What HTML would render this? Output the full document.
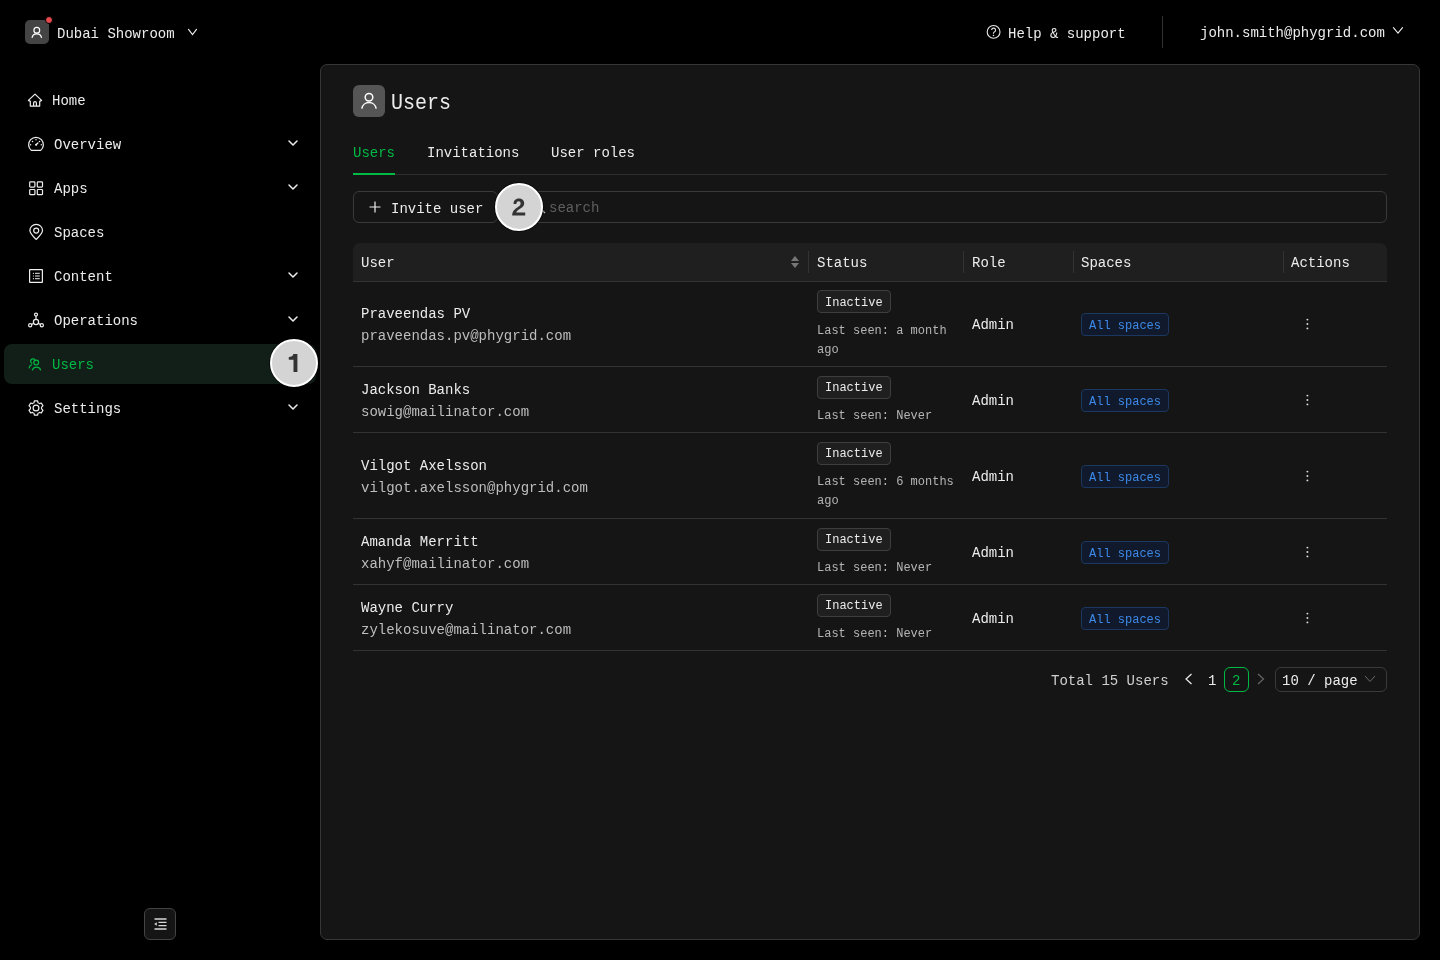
<!DOCTYPE html>
<html>
<head>
<meta charset="utf-8">
<style>
*{margin:0;padding:0;box-sizing:border-box}
html,body{width:1440px;height:960px;overflow:hidden;background:#000}
body{font-family:"Liberation Mono",monospace;color:#ececec;font-size:14px}
#root{position:absolute;left:0;top:0;width:1440px;height:960px;will-change:transform}
.a{position:absolute;white-space:nowrap}
.t14{font-size:14px;line-height:20px}
.t12{font-size:12px;line-height:19px}
svg{position:absolute;overflow:visible}
.panel{position:absolute;left:320px;top:64px;width:1100px;height:876px;background:#151515;border:1px solid #363636;border-radius:7px}
.hl{position:absolute;height:1px;background:#2e2e2e}
.tag{position:absolute;height:23px;border:1px solid #3e3e3e;background:#1f1f1f;border-radius:4px;font-size:12px;line-height:21px;padding:2px 7px 0;color:#ececec}
.btag{position:absolute;height:23px;border:1px solid #1c3760;background:#111a2c;border-radius:4px;font-size:12px;line-height:21px;padding:2px 7px 0;color:#3c89e8}
.badge{position:absolute;width:48px;height:48px;border-radius:50%;background:#d4d4d4;border:2px solid #fff;box-shadow:0 0 0 1px rgba(0,0,0,.55)}
</style>
</head>
<body>
<div id="root">
<div class="a" style="left:25px;top:20px;width:24px;height:24px;background:#444;border-radius:5px"></div>
<svg style="left:25px;top:20px" width="24" height="24" viewBox="0 0 24 24" fill="none" stroke="#fff" stroke-width="1.2"><circle cx="11.8" cy="10.2" r="2.9"/><path d="M7 17.8 A4.9 4.9 0 0 1 16.6 17.8"/></svg>
<div class="a" style="left:45px;top:16px;width:8px;height:8px;border-radius:50%;background:#e5484d;border:1px solid #000"></div>
<div class="a t14" style="left:57px;top:24px">Dubai Showroom</div>
<svg style="left:186px;top:27px" width="12" height="8" viewBox="0 0 12 8" fill="none" stroke="#f4f4f4" stroke-width="1.1" stroke-linecap="round"><path d="M2.5 2.4 L6.5 7.6 L10.5 2.4"/></svg>
<svg style="left:986px;top:25px" width="15" height="15" viewBox="0 0 15 15" fill="none" stroke="#e8e8e8" stroke-width="1.1"><circle cx="7.6" cy="6.9" r="6.4"/><path d="M5.6 5.1 A2 2 0 1 1 8.3 7 C7.7 7.3 7.5 7.8 7.5 8.4 V8.7"/><circle cx="7.5" cy="10.5" r="0.75" fill="#e8e8e8" stroke="none"/></svg>
<div class="a t14" style="left:1008px;top:24px">Help &amp; support</div>
<div class="a" style="left:1162px;top:16px;width:1px;height:32px;background:#333"></div>
<div class="a t14" style="left:1200px;top:23px">john.smith@phygrid.com</div>
<svg style="left:1392px;top:27px" width="12" height="8" viewBox="0 0 12 8" fill="none" stroke="#f0f0f0" stroke-width="1.1" stroke-linecap="round"><path d="M1.4 0.6 L6 6.2 L10.5 0.6"/></svg>
<div class="a" style="left:4px;top:344px;width:312px;height:40px;background:#121f18;border-radius:8px"></div>
<div class="a t14" style="left:52px;top:91px;color:#ececec">Home</div>
<div class="a t14" style="left:54px;top:135px;color:#ececec">Overview</div>
<div class="a t14" style="left:54px;top:179px;color:#ececec">Apps</div>
<div class="a t14" style="left:54px;top:223px;color:#ececec">Spaces</div>
<div class="a t14" style="left:54px;top:267px;color:#ececec">Content</div>
<div class="a t14" style="left:54px;top:311px;color:#ececec">Operations</div>
<div class="a t14" style="left:52px;top:355px;color:#00b944">Users</div>
<div class="a t14" style="left:54px;top:399px;color:#ececec">Settings</div>
<svg style="left:0;top:0" width="320" height="960" viewBox="0 0 320 960" fill="none" stroke="#eeeeee" stroke-width="1.2" stroke-linecap="round" stroke-linejoin="round">
<path d="M30.3 106.1 V101.4 L28.4 100.4 L35 94.1 L41.6 100.4 L39.7 101.4 V106.1 Z M33.6 106 V103.1 A1.4 1.4 0 0 1 36.4 103.1 V106"/>
<path d="M31.3 150.4 A7.4 7.4 0 1 1 40.7 150.4 Z"/><path d="M36.1 144.8 L37.9 143" stroke-width="1.3"/><circle cx="36.1" cy="144.8" r="1.05" fill="#eeeeee" stroke="none"/><circle cx="36" cy="139.8" r="0.7" fill="#eeeeee" stroke="none"/><circle cx="32.5" cy="141.4" r="0.75" fill="#eeeeee" stroke="none"/><circle cx="39.5" cy="141.4" r="0.75" fill="#eeeeee" stroke="none"/><circle cx="30.6" cy="144.8" r="0.7" fill="#eeeeee" stroke="none"/><circle cx="41.3" cy="144.8" r="0.7" fill="#eeeeee" stroke="none"/>
<rect x="29.7" y="181.9" width="5.2" height="5.2" rx="0.8"/>
<rect x="29.7" y="189.5" width="5.2" height="5.2" rx="0.8"/>
<rect x="37.3" y="181.9" width="5.2" height="5.2" rx="0.8"/>
<rect x="37.3" y="189.5" width="5.2" height="5.2" rx="0.8"/>
<path d="M36.2 239.4 C33.2 236.6 29.9 233.6 29.9 230.6 A6.3 6.3 0 0 1 42.5 230.6 C42.5 233.6 39.2 236.6 36.2 239.4 Z"/><circle cx="36.2" cy="230.6" r="2.5"/>
<rect x="29.6" y="269.6" width="12.8" height="12.8" rx="0.3"/><path d="M35.4 273.3 H39.4 M35.4 276 H39.4 M35.4 278.7 H39.4" stroke-width="1"/><circle cx="33.4" cy="273.3" r="0.6" fill="#eeeeee" stroke="none"/><circle cx="33.4" cy="276" r="0.6" fill="#eeeeee" stroke="none"/><circle cx="33.4" cy="278.7" r="0.6" fill="#eeeeee" stroke="none"/>
<circle cx="36" cy="314.6" r="1.5"/><circle cx="36" cy="322" r="2.6"/><circle cx="30.2" cy="325.2" r="1.6"/><circle cx="41.8" cy="325.2" r="1.6"/><path d="M36 316.1 V319.4 M31.6 324.4 L33.7 323.2 M40.4 324.4 L38.3 323.2"/>
<g stroke="#00b944"><circle cx="36.2" cy="362.6" r="2.4"/><path d="M32.4 370 A4.4 4.4 0 0 1 40.6 370"/><path d="M35 360.2 A2.3 2.3 0 1 0 31.8 363.2"/><path d="M29.2 367.8 A3.8 3.8 0 0 1 31.6 364.8"/></g>
<path d="M33.99 402.77 L34.36 400.89 L37.64 400.89 L38.01 402.77 A5.60 5.60 0 0 1 39.52 403.65 L41.34 403.02 L42.98 405.87 L41.53 407.12 A5.60 5.60 0 0 1 41.53 408.88 L42.98 410.13 L41.34 412.98 L39.52 412.35 A5.60 5.60 0 0 1 38.01 413.23 L37.64 415.11 L34.36 415.11 L33.99 413.23 A5.60 5.60 0 0 1 32.48 412.35 L30.66 412.98 L29.02 410.13 L30.47 408.88 A5.60 5.60 0 0 1 30.47 407.12 L29.02 405.87 L30.66 403.02 L32.48 403.65 A5.60 5.60 0 0 1 33.99 402.77 Z"/><circle cx="36" cy="408" r="2.9"/>
<path d="M289 141 L293 145 L297 141" stroke-width="1.5"/>
<path d="M289 185 L293 189 L297 185" stroke-width="1.5"/>
<path d="M289 273 L293 277 L297 273" stroke-width="1.5"/>
<path d="M289 317 L293 321 L297 317" stroke-width="1.5"/>
<path d="M289 405 L293 409 L297 405" stroke-width="1.5"/>
</svg>
<div class="a" style="left:144px;top:908px;width:32px;height:32px;border:1px solid #444;border-radius:6px;background:#151515"></div>
<svg style="left:145px;top:908px" width="31" height="31" viewBox="0 0 31 31" fill="none" stroke="#d8d8d8" stroke-width="1.3"><path d="M9.5 11 H21.5 M13.5 14.4 H21.5 M13.5 17.6 H21.5 M9.5 21 H21.5"/><path d="M9.2 16 L11.8 14.2 V17.8 Z" fill="#d8d8d8" stroke="none"/></svg>
<div class="badge" style="left:270px;top:339px"></div>
<svg style="left:0;top:0" width="10" height="10"><path d="M293.3 354 H297.4 V372 H293.5 V359.8 H288.8 V357 C291.3 357 292.9 356.2 293.3 354 Z" fill="#333"/></svg>
<div class="panel"></div>
<div class="a" style="left:353px;top:85px;width:32px;height:32px;background:#555;border-radius:6px"></div>
<svg style="left:353px;top:85px" width="32" height="32" viewBox="0 0 32 32" fill="none" stroke="#fff" stroke-width="1.5"><circle cx="16" cy="12.3" r="3.8"/><path d="M8.8 23.6 A7.3 7.3 0 0 1 23.2 23.6"/></svg>
<div class="a" style="left:391px;top:90px;font-size:20px;line-height:28px;transform:scaleY(1.12);transform-origin:0 19.3px">Users</div>
<div class="hl" style="left:353px;top:174px;width:1034px;background:#2e2e2e"></div>
<div class="a" style="left:353px;top:173px;width:42px;height:2px;background:#00b944"></div>
<div class="a t14" style="left:353px;top:143px;color:#00b944">Users</div>
<div class="a t14" style="left:427px;top:143px">Invitations</div>
<div class="a t14" style="left:551px;top:143px">User roles</div>
<div class="a" style="left:514px;top:191px;width:873px;height:32px;border:1px solid #3a3a3a;border-radius:6px"></div>
<svg style="left:532px;top:200px" width="14" height="14" viewBox="0 0 14 14" fill="none" stroke="#bbb" stroke-width="1.2"><circle cx="6" cy="6" r="4.6"/><path d="M9.4 9.4 L13 13"/></svg>
<div class="a t14" style="left:549px;top:198px;color:#5f5f5f">search</div>
<div class="a" style="left:353px;top:191px;width:145px;height:32px;border:1px solid #3a3a3a;border-radius:6px;background:#151515"></div>
<svg style="left:369px;top:201px" width="12" height="12" viewBox="0 0 12 12" fill="none" stroke="#f0f0f0" stroke-width="1.2"><path d="M6 0.5 V11.5 M0.5 6 H11.5"/></svg>
<div class="a t14" style="left:391px;top:199px">Invite user</div>
<div class="badge" style="left:495px;top:183px"></div>
<svg style="left:0;top:0" width="10" height="10"><path d="M513.6 204 C513.4 200.6 515.6 198.4 518.8 198.4 C522 198.4 524.2 200.4 524.2 203.2 C524.2 205.6 522.8 207 520.4 208.6 C518.2 210 516.6 211.2 516.2 212.6 H525.2 V215.6 H512.2 C512.2 211.2 514.6 209.2 517.6 207.2 C519.8 205.8 520.6 205 520.6 203.4 C520.6 202 519.8 201.2 518.6 201.2 C517.2 201.2 516.4 202.2 516.4 204 Z" fill="#333"/></svg>
<div class="a" style="left:353px;top:243px;width:1034px;height:38px;background:#1f1f1f;border-radius:7px 7px 0 0"></div>
<div class="hl" style="left:353px;top:281px;width:1034px;background:#333"></div>
<div class="a" style="left:808px;top:251px;width:1px;height:22px;background:#333"></div>
<div class="a" style="left:963px;top:251px;width:1px;height:22px;background:#333"></div>
<div class="a" style="left:1073px;top:251px;width:1px;height:22px;background:#333"></div>
<div class="a" style="left:1283px;top:251px;width:1px;height:22px;background:#333"></div>
<svg style="left:790px;top:255px" width="10" height="14" viewBox="0 0 10 14" fill="#777"><path d="M1 6 L5 1 L9 6 Z M1 8 L5 13 L9 8 Z"/></svg>
<div class="a t14" style="left:361px;top:253px">User</div>
<div class="a t14" style="left:817px;top:253px">Status</div>
<div class="a t14" style="left:972px;top:253px">Role</div>
<div class="a t14" style="left:1081px;top:253px">Spaces</div>
<div class="a t14" style="left:1291px;top:253px">Actions</div>
<div class="a t14" style="left:361px;top:303px;line-height:22px;color:#ececec">Praveendas PV<br><span style="color:#bdbdbd">praveendas.pv@phygrid.com</span></div>
<div class="tag" style="left:817px;top:290px;">Inactive</div>
<div class="a t12" style="left:817px;top:322px;color:#b5b5b5">Last seen: a month<br>ago</div>
<div class="a t14" style="left:972px;top:315px">Admin</div>
<div class="btag" style="left:1081px;top:313px">All spaces</div>
<svg style="left:1305px;top:318px" width="4" height="12" viewBox="0 0 4 12" fill="#e0e0e0"><circle cx="2.4" cy="1.6" r="0.95"/><circle cx="2.4" cy="6" r="0.95"/><circle cx="2.4" cy="10.4" r="0.95"/></svg>
<div class="hl" style="left:353px;top:366px;width:1034px;background:#333333"></div>
<div class="a t14" style="left:361px;top:379px;line-height:22px;color:#ececec">Jackson Banks<br><span style="color:#bdbdbd">sowig@mailinator.com</span></div>
<div class="tag" style="left:817px;top:376px;padding-top:1px">Inactive</div>
<div class="a t12" style="left:817px;top:407px;color:#b5b5b5">Last seen: Never</div>
<div class="a t14" style="left:972px;top:391px">Admin</div>
<div class="btag" style="left:1081px;top:389px">All spaces</div>
<svg style="left:1305px;top:394px" width="4" height="12" viewBox="0 0 4 12" fill="#e0e0e0"><circle cx="2.4" cy="1.6" r="0.95"/><circle cx="2.4" cy="6" r="0.95"/><circle cx="2.4" cy="10.4" r="0.95"/></svg>
<div class="hl" style="left:353px;top:432px;width:1034px;background:#333333"></div>
<div class="a t14" style="left:361px;top:455px;line-height:22px;color:#ececec">Vilgot Axelsson<br><span style="color:#bdbdbd">vilgot.axelsson@phygrid.com</span></div>
<div class="tag" style="left:817px;top:442px;padding-top:1px">Inactive</div>
<div class="a t12" style="left:817px;top:473px;color:#b5b5b5">Last seen: 6 months<br>ago</div>
<div class="a t14" style="left:972px;top:467px">Admin</div>
<div class="btag" style="left:1081px;top:465px">All spaces</div>
<svg style="left:1305px;top:470px" width="4" height="12" viewBox="0 0 4 12" fill="#e0e0e0"><circle cx="2.4" cy="1.6" r="0.95"/><circle cx="2.4" cy="6" r="0.95"/><circle cx="2.4" cy="10.4" r="0.95"/></svg>
<div class="hl" style="left:353px;top:518px;width:1034px;background:#333333"></div>
<div class="a t14" style="left:361px;top:531px;line-height:22px;color:#ececec">Amanda Merritt<br><span style="color:#bdbdbd">xahyf@mailinator.com</span></div>
<div class="tag" style="left:817px;top:528px;padding-top:1px">Inactive</div>
<div class="a t12" style="left:817px;top:559px;color:#b5b5b5">Last seen: Never</div>
<div class="a t14" style="left:972px;top:543px">Admin</div>
<div class="btag" style="left:1081px;top:541px">All spaces</div>
<svg style="left:1305px;top:546px" width="4" height="12" viewBox="0 0 4 12" fill="#e0e0e0"><circle cx="2.4" cy="1.6" r="0.95"/><circle cx="2.4" cy="6" r="0.95"/><circle cx="2.4" cy="10.4" r="0.95"/></svg>
<div class="hl" style="left:353px;top:584px;width:1034px;background:#333333"></div>
<div class="a t14" style="left:361px;top:597px;line-height:22px;color:#ececec">Wayne Curry<br><span style="color:#bdbdbd">zylekosuve@mailinator.com</span></div>
<div class="tag" style="left:817px;top:594px;padding-top:1px">Inactive</div>
<div class="a t12" style="left:817px;top:625px;color:#b5b5b5">Last seen: Never</div>
<div class="a t14" style="left:972px;top:609px">Admin</div>
<div class="btag" style="left:1081px;top:607px">All spaces</div>
<svg style="left:1305px;top:612px" width="4" height="12" viewBox="0 0 4 12" fill="#e0e0e0"><circle cx="2.4" cy="1.6" r="0.95"/><circle cx="2.4" cy="6" r="0.95"/><circle cx="2.4" cy="10.4" r="0.95"/></svg>
<div class="hl" style="left:353px;top:650px;width:1034px;background:#333333"></div>
<div class="a t14" style="left:1051px;top:671px;color:#d0d0d0">Total 15 Users</div>
<svg style="left:1184px;top:673px" width="10" height="12" viewBox="0 0 10 12" fill="none" stroke="#eee" stroke-width="1.2"><path d="M7.5 1 L2 6 L7.5 11"/></svg>
<div class="a t14" style="left:1208px;top:671px">1</div>
<div class="a" style="left:1224px;top:667px;width:25px;height:25px;border:1.5px solid #00b944;border-radius:6px"></div>
<div class="a t14" style="left:1232px;top:671px;color:#00b944">2</div>
<svg style="left:1256px;top:673px" width="10" height="12" viewBox="0 0 10 12" fill="none" stroke="#666" stroke-width="1.2"><path d="M2 1 L7.5 6 L2 11"/></svg>
<div class="a" style="left:1275px;top:667px;width:112px;height:25px;border:1px solid #3a3a3a;border-radius:6px"></div>
<div class="a t14" style="left:1282px;top:671px">10 / page</div>
<svg style="left:1364px;top:675px" width="12" height="8" viewBox="0 0 12 8" fill="none" stroke="#6a6a6a" stroke-width="1"><path d="M1 1 L6 6.5 L11 1"/></svg>
</div>
</body>
</html>
